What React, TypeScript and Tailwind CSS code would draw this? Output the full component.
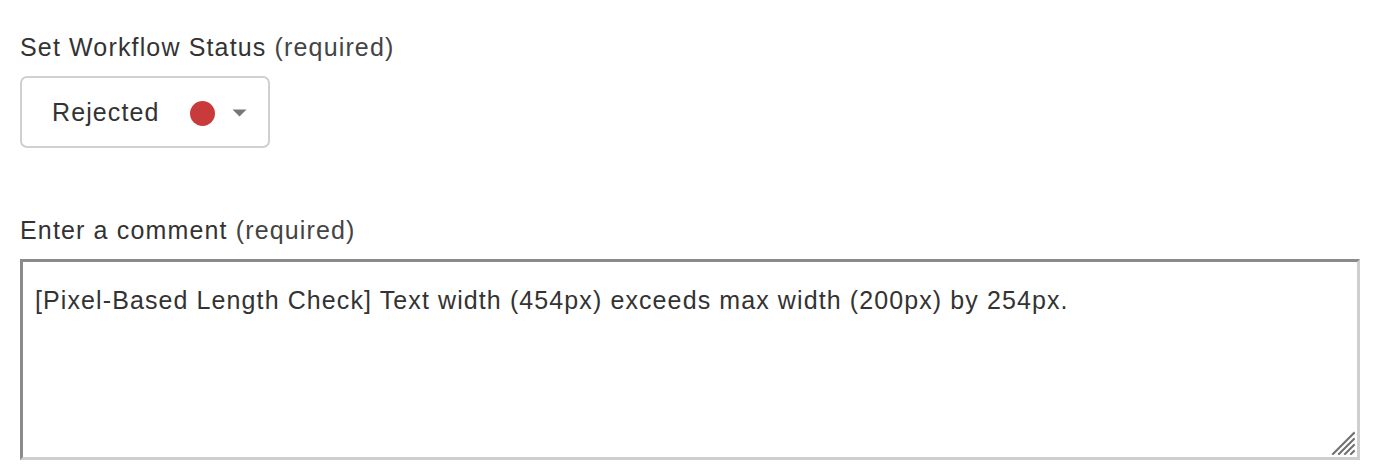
import React, { useState } from "react";

export default function App() {
	const [comment, setComment] = useState<string>(
		"[Pixel-Based Length Check] Text width (454px) exceeds max width (200px) by 254px."
	);

	return (
		<div
			className="w-[1380px] h-[476px] bg-white px-5 pt-[31px] text-[#333] tracking-[1.15px]"
			style={{ fontFamily: '"Liberation Sans", Arial, sans-serif' }}
		>
			{/* Status */}
			<label className="block text-[25px] leading-[32px]">
				Set Workflow Status <span className="text-[#444]">(required)</span>
			</label>
			<button
				type="button"
				className="mt-[13px] flex h-[72px] w-[250px] items-center rounded-[7px] border-2 border-[#d0d0d0] bg-white pl-[30px] pt-[2px] text-[25px] tracking-[1.1px]"
			>
				<span>Rejected</span>
				<span className="ml-[31px] size-[25px] rounded-full bg-[#c93a3a]" />
				<svg className="ml-[17px]" width="15" height="8" viewBox="0 0 15 8">
					<path d="M0.5 0.5 L14.5 0.5 L7.5 7.5 Z" fill="#777" />
				</svg>
			</button>

			{/* Comment */}
			<label className="mt-[66px] block text-[25px] leading-[32px]">
				Enter a comment <span className="text-[#444]">(required)</span>
			</label>
			<div className="relative mt-[13px] w-[1340px]">
				<textarea
					value={comment}
					onChange={e => setComment(e.target.value)}
					className="block h-[201px] w-full resize-none border-[3px] border-t-[#8a8a8a] border-l-[#8a8a8a] border-r-[#cfcfcf] border-b-[#cfcfcf] px-[12px] py-[23px] text-[25px] leading-[30px] tracking-[1.1px] text-[#333] outline-none"
					style={{ fontFamily: '"Liberation Sans", Arial, sans-serif' }}
				/>
				{/* resize grip */}
				<svg
					className="pointer-events-none absolute bottom-[5px] right-[5px]"
					width="24"
					height="24"
					viewBox="0 0 24 24"
				>
					<g stroke="#707070" strokeWidth="2" strokeLinecap="square">
						<path d="M2 23 L23 2" />
						<path d="M8 23 L23 8" />
						<path d="M14 23 L23 14" />
						<path d="M20 23 L23 20" />
					</g>
				</svg>
			</div>
		</div>
	);
}
